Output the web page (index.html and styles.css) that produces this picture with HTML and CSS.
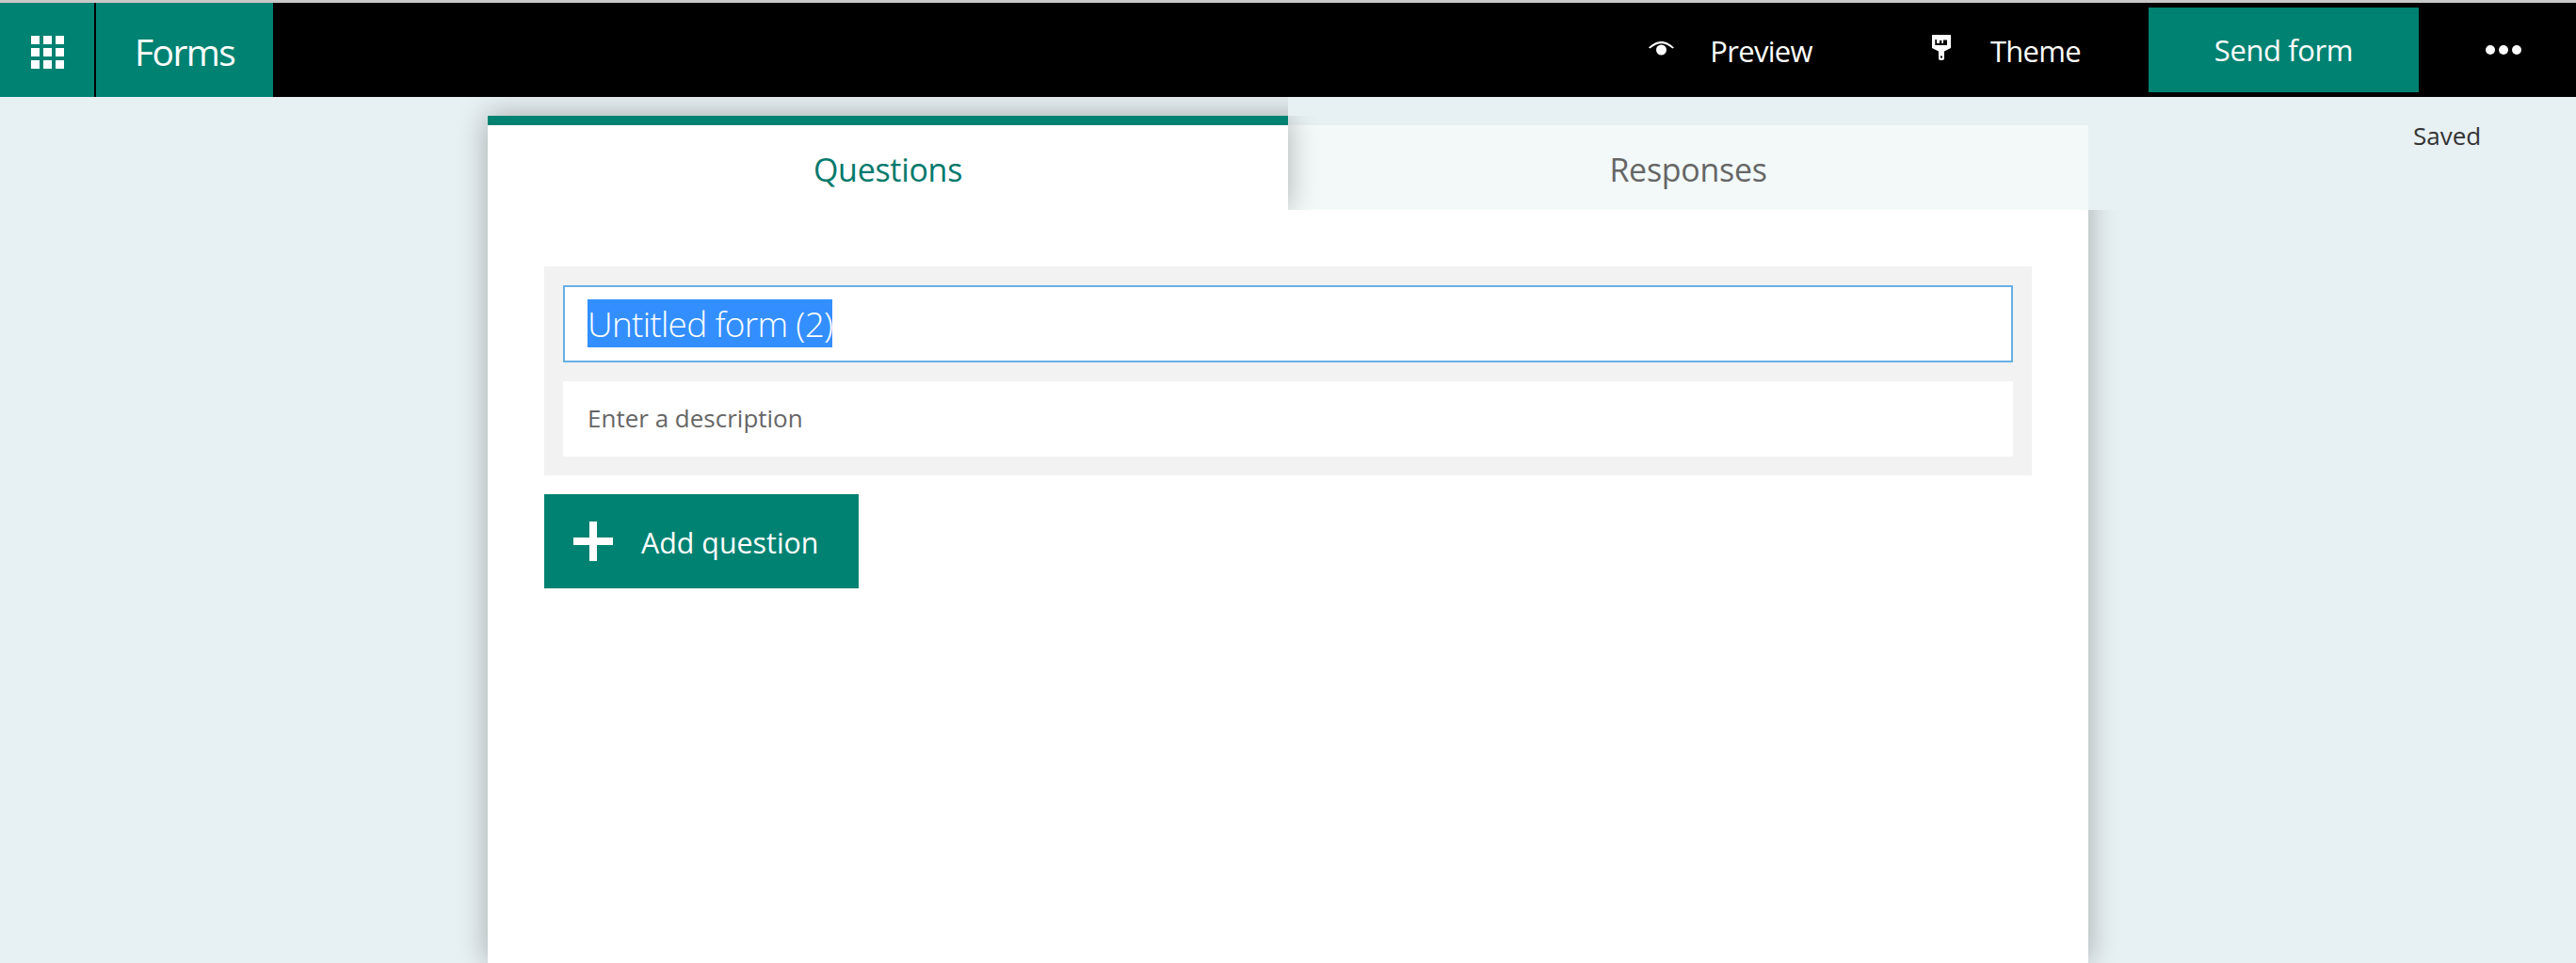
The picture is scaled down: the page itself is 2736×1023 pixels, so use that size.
FILE: index.html
```html
<!DOCTYPE html>
<html lang="en">
<head>
<meta charset="utf-8">
<title>Forms</title>
<link rel="stylesheet" href="styles.css">
</head>
<body>
<header class="topbar">
  <div class="waffle">
    <svg class="waffle-icon" width="35" height="35" viewBox="0 0 35 35" aria-hidden="true"><path fill="#fff" d="M0 0h9v9H0zM13 0h9v9h-9zM26 0h9v9h-9zM0 13h9v9H0zM13 13h9v9h-9zM26 13h9v9h-9zM0 26h9v9H0zM13 26h9v9h-9zM26 26h9v9h-9z"/></svg>
  </div>
  <div class="brand">Forms</div>
  <nav class="actions">
    <a class="action action-preview">
      <svg class="icon-eye" width="27" height="15" viewBox="0 0 27 15" aria-hidden="true"><path fill="#fff" d="M0 6.500C5 2 9 0 13.500 0S22 2 27 6.500l-1.500 1C21 4 17 2.200 13.500 2.200S6 4 1.500 7.500z"/><circle cx="13.500" cy="9" r="5.500" fill="#fff"/></svg>
      <span>Preview</span>
    </a>
    <a class="action action-theme">
      <svg class="icon-brush" width="20" height="27" viewBox="0 0 20 27" aria-hidden="true"><path fill="#fff" d="M0 0h20v14l-7 3.500V25a2 2 0 0 1-2 2H9a2 2 0 0 1-2-2v-7.500L0 14z"/><path fill="#000" d="M3.300 5H5v4h3V6h2.300v3H12V5.500h4V11H3.300z"/><rect x="9" y="22.500" width="2" height="2" fill="#000"/></svg>
      <span>Theme</span>
    </a>
    <button class="send">Send form</button>
    <button class="more" aria-label="More">
      <i class="dot"></i><i class="dot"></i><i class="dot"></i>
    </button>
  </nav>
</header>
<div class="stage">
  <div class="gutter"></div>
  <main class="sheet">
    <div class="tabs">
      <div class="tab tab-active">Questions</div>
      <div class="tab tab-idle">Responses</div>
    </div>
    <section class="card">
      <div class="title-block">
        <div class="title-field"><span class="selected">Untitled form (2)</span></div>
        <div class="desc-field">Enter a description</div>
      </div>
      <button class="add">
        <svg class="icon-plus" width="42" height="42" viewBox="0 0 42 42" aria-hidden="true"><path fill="#fff" d="M17 0h8v17h17v8H25v17h-8V25H0v-8h17z"/></svg>
        <span class="add-label">Add question</span>
      </button>
    </section>
  </main>
  <aside class="status">Saved</aside>
</div>
</body>
</html>
```
FILE: styles.css
```css
* { box-sizing: border-box; }
html, body { margin: 0; height: 1023px; overflow: hidden; }
body {
  border-top: 3px solid #c9c9c9;
  background: #e7f0f3;
  font-family: "Open Sans", "Noto Sans", sans-serif;
  color: #333;
}
.topbar {
  display: flex;
  height: 100px;
  background: #000;
  color: #fff;
  position: relative;
  z-index: 5;
}
.waffle {
  width: 100px;
  padding-top: 5px;
  background: #008272;
  display: flex;
  align-items: center;
  justify-content: center;
}
.brand {
  margin-left: 2px;
  width: 188px;
  padding: 3px 0 0 41px;
  background: #008272;
  display: flex;
  align-items: center;
  font-size: 39px;
  font-weight: 400;
  letter-spacing: -1.6px;
}
.actions {
  margin-left: auto;
  display: flex;
  align-items: center;
}
.action {
  display: flex;
  align-items: center;
  padding-top: 2px;
  font-size: 31px;
  font-weight: 400;
  letter-spacing: -0.7px;
}
.action-preview { gap: 38px; margin-right: 127px; }
.action-theme { gap: 42px; margin-right: 72px; }
.icon-eye { margin-top: -5px; }
.icon-brush { margin-top: -7px; }
.send {
  width: 287px;
  height: 90px;
  border: 0;
  background: #008272;
  color: #fff;
  font: 400 31px "Open Sans", "Noto Sans", sans-serif;
  letter-spacing: -0.4px;
  padding: 0;
}
.more {
  width: 167px;
  height: 90px;
  border: 0;
  padding: 0 0 0 12px;
  background: transparent;
  display: flex;
  align-items: center;
  justify-content: center;
  gap: 4px;
}
.dot {
  width: 10px;
  height: 10px;
  border-radius: 50%;
  background: #fff;
}
.stage {
  display: grid;
  grid-template-columns: 518px 1700px 1fr;
}
.sheet {
  padding-top: 20px;
}
.tabs {
  display: flex;
  align-items: flex-end;
  position: relative;
  z-index: 4;
}
.tab {
  width: 850px;
  display: flex;
  align-items: center;
  justify-content: center;
  padding-top: 3px;
  font-size: 34px;
  font-weight: 400;
  letter-spacing: -0.3px;
}
.tab-active {
  height: 100px;
  border-top: 10px solid #008272;
  background: #fff;
  color: #00796b;
  box-shadow: 0 0 30px rgba(0, 0, 0, 0.3);
  clip-path: inset(0 -40px 0 0);
  position: relative;
  z-index: 2;
}
.tab-idle {
  height: 90px;
  background: #f3f9f9;
  color: #666;
}
.card {
  height: 800px;
  padding: 60px;
  background: #fff;
  position: relative;
  z-index: 3;
}
.card::before {
  content: "";
  position: absolute;
  inset: -100px 0 0 0;
  z-index: -1;
  box-shadow: 0 0 30px rgba(0, 0, 0, 0.3);
  clip-path: polygon(-40px -40px, 850px -40px, 850px 100px, 1740px 100px, 1740px 940px, -40px 940px);
}
.title-block {
  background: #f2f2f2;
  padding: 20px;
  height: 222px;
}
.title-field {
  height: 82px;
  border: 2px solid #69afe5;
  background: #fff;
  padding: 13px 0 0 24px;
  font-size: 37px;
  font-weight: 300;
  line-height: 51px;
  letter-spacing: -0.72px;
}
.selected {
  display: inline-block;
  height: 51px;
  background: #338fff;
  color: #fff;
}
.desc-field {
  margin-top: 20px;
  height: 80px;
  background: #fff;
  padding: 0 0 3px 26px;
  display: flex;
  align-items: center;
  font-size: 26px;
  color: #666;
}
.add {
  margin-top: 20px;
  width: 334px;
  height: 100px;
  border: 0;
  padding: 0 0 0 31px;
  background: #008272;
  color: #fff;
  display: flex;
  align-items: center;
  gap: 30px;
  font: 400 30.4px "Open Sans", "Noto Sans", sans-serif;
}
.add-label { padding-top: 3px; }
.status {
  padding: 23px 0 0 345px;
  font-size: 26px;
  white-space: nowrap;
}
```
